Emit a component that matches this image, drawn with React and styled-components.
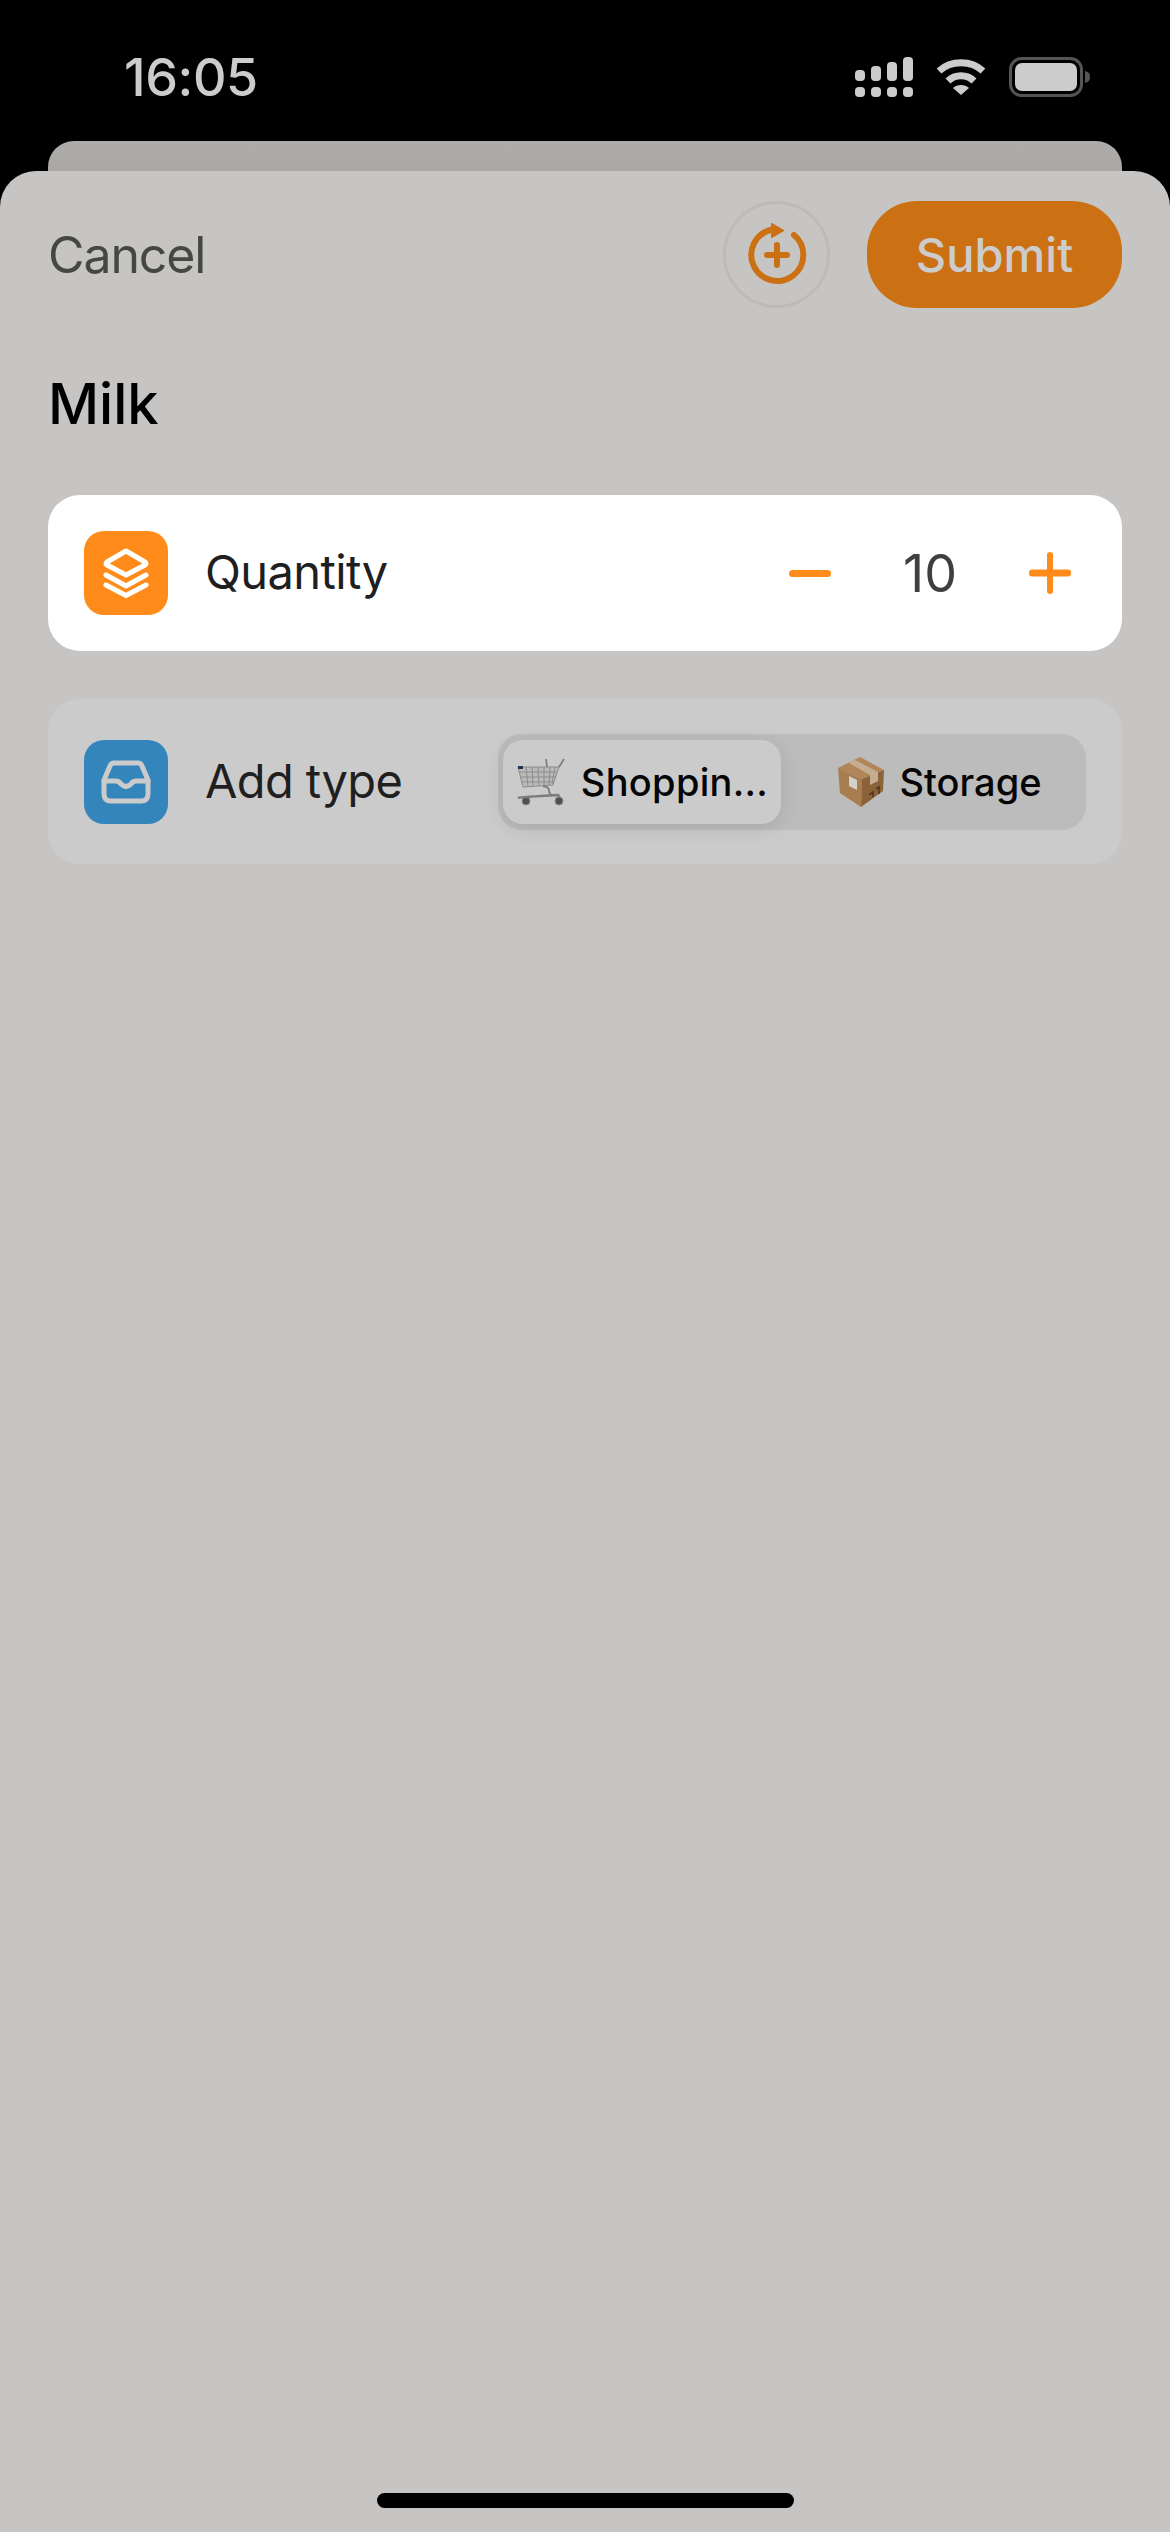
import React from "react";
import styled, { createGlobalStyle } from "styled-components";

const Global = createGlobalStyle`
  html, body { margin: 0; padding: 0; background: #000; }
  body { font-family: Inter, "Liberation Sans", sans-serif; }
`;

const Screen = styled.div`
  position: relative;
  width: 1170px;
  height: 2532px;
  background: #000;
  overflow: hidden;
  display: flex;
  flex-direction: column;
`;

const StatusBar = styled.div`
  height: 141px;
  flex: none;
  box-sizing: border-box;
  padding: 50px 79px 0 124px;
  display: flex;
  align-items: flex-start;
  justify-content: space-between;
`;

const Clock = styled.div`
  font-size: 52px;
  line-height: 56px;
  font-weight: 500;
  color: #cccccc;
  letter-spacing: -0.4px;
`;

const StatusIcons = styled.div`
  display: flex;
  align-items: center;
  gap: 23px;
  padding-top: 7px;
`;

const BackCard = styled.div`
  height: 30px;
  flex: none;
  margin: 0 48px;
  border-radius: 26px 26px 0 0;
  background: linear-gradient(#adacaa, #a9a8a5);
`;

const Sheet = styled.div`
  flex: 1;
  box-sizing: border-box;
  padding: 30px 48px 0;
  background: #c6c5c3;
  border-radius: 36px 36px 0 0;
`;

const TopRow = styled.div`
  display: flex;
  align-items: center;
  height: 107px;
`;

const Cancel = styled.div`
  font-size: 50px;
  color: #464644;
  letter-spacing: -1.1px;
  flex: 1;
`;

const RoundButton = styled.div`
  width: 107px;
  height: 107px;
  box-sizing: border-box;
  border: 3px solid #bcbbb9;
  border-radius: 50%;
  display: flex;
  align-items: center;
  justify-content: center;
  margin-right: 37px;
`;

const Submit = styled.div`
  width: 255px;
  height: 107px;
  border-radius: 50px;
  background: #cc7014;
  color: #cccccc;
  font-size: 47px;
  font-weight: 500;
  display: flex;
  align-items: center;
  justify-content: center;
`;

const Title = styled.div`
  font-size: 56px;
  line-height: 68px;
  font-weight: 500;
  color: #000;
  margin-top: 62px;
`;

const Row = styled.div`
  display: flex;
  align-items: center;
  box-sizing: border-box;
  padding: 0 36px;
  height: ${p => p.$height}px;
  margin-top: ${p => p.$top}px;
  border-radius: 32px;
  background: ${p => p.$bg};
`;

const IconTile = styled.div`
  width: 84px;
  height: 84px;
  flex: none;
  border-radius: 20px;
  background: ${p => p.$bg};
  display: flex;
  align-items: center;
  justify-content: center;
`;

const RowLabel = styled.div`
  font-size: 47px;
  line-height: 54px;
  padding-bottom: 2px;
  color: #1f1f1f;
  letter-spacing: -0.6px;
  margin-left: 37px;
  flex: 1;
`;

const Stepper = styled.div`
  display: flex;
  align-items: center;
  padding-right: 15px;
`;

const Count = styled.div`
  width: 198px;
  text-align: center;
  font-size: 52px;
  color: #3f3f3f;
`;

const Segment = styled.div`
  width: 588px;
  height: 96px;
  box-sizing: border-box;
  padding: 6px 5px;
  display: flex;
  gap: 18px;
  background: #bcbcbc;
  border-radius: 24px;
  flex: none;
`;

const Option = styled.div`
  display: flex;
  align-items: center;
  justify-content: center;
  gap: 15px;
  width: ${p => p.$active ? 278 : 282}px;
  border-radius: 20px;
  font-size: 38px;
  font-weight: 500;
  letter-spacing: ${p => p.$active ? 0.3 : 0}px;
  color: #050505;
  background: ${p => p.$active ? "#cbcbcb" : "transparent"};
  box-shadow: ${p => p.$active ? "0 4px 20px rgba(0,0,0,0.1)" : "none"};
`;

const HomeBar = styled.div`
  position: absolute;
  left: 377px;
  bottom: 24px;
  width: 417px;
  height: 15px;
  border-radius: 8px;
  background: #000;
`;

const SignalIcon = () => (
  <svg width="58" height="40" viewBox="0 0 58 40" fill="#cccccc">
    <rect y="13" width="10" height="11" rx="4" />
    <rect x="16" y="9" width="10" height="15" rx="4" />
    <rect x="32" y="5" width="10" height="19" rx="4" />
    <rect x="48" width="10" height="24" rx="4" />
    <rect y="30" width="10" height="10" rx="4" />
    <rect x="16" y="30" width="10" height="10" rx="4" />
    <rect x="32" y="30" width="10" height="10" rx="4" />
    <rect x="48" y="30" width="10" height="10" rx="4" />
  </svg>
);

const WifiIcon = () => (
  <svg width="50" height="38" viewBox="0 0 50 38" fill="none" stroke="#cccccc" strokeWidth="7">
    <path d="M3 13 C15 2 35 2 47 13" />
    <path d="M12 23 C19 16 31 16 38 23" />
    <path d="M25 37 L17 30 C21 26 29 26 33 30 Z" fill="#cccccc" stroke="none" />
  </svg>
);

const BatteryIcon = () => (
  <svg width="82" height="40" viewBox="0 0 82 40">
    <rect x="1.5" y="1.5" width="71" height="37" rx="11" fill="none" stroke="#555555" strokeWidth="3" />
    <rect x="6" y="6" width="62" height="28" rx="7" fill="#cccccc" />
    <path d="M76 14 C80 15 81 17 81 20 C81 23 80 25 76 26 Z" fill="#555555" />
  </svg>
);

const AddCycleIcon = () => (
  <svg width="60" height="66" viewBox="0 0 60 66" fill="none" stroke="#cc7014" strokeWidth="6" strokeLinecap="round">
    <path d="M25 7.500 A 26 26 0 1 0 47 13" />
    <path d="M25 2 L36 8.500 L25 15 Z" fill="#cc7014" strokeWidth="2" strokeLinejoin="round" />
    <path d="M20 33 H40 M30 23 V43" />
  </svg>
);

const LayersIcon = () => (
  <svg width="46" height="50" viewBox="0 0 46 50" fill="none" stroke="#fff" strokeWidth="5" strokeLinecap="round" strokeLinejoin="round">
    <path d="M23 3 L42 14 Q44 15.500 42 17 L23 27 L4 17 Q2 15.500 4 14 Z" />
    <path d="M3 27 L23 38 L43 27" />
    <path d="M3 37 L23 47.500 L43 37" />
  </svg>
);

const TrayIcon = () => (
  <svg width="50" height="44" viewBox="0 0 50 44" fill="none" stroke="#cbcbcb" strokeWidth="5" strokeLinecap="round" strokeLinejoin="round">
    <path d="M13 3 H37 Q40 3 41 6 L47 20 V34 Q47 41 40 41 H10 Q3 41 3 34 V20 L9 6 Q10 3 13 3 Z" />
    <path d="M3 21 H15 Q18 21 20 24 Q25 29 30 24 Q32 21 35 21 H47" />
  </svg>
);

const MinusIcon = () => (
  <svg width="42" height="7" viewBox="0 0 42 7"><rect width="42" height="7" rx="3.500" fill="#ff8c1a" /></svg>
);

const PlusIcon = () => (
  <svg width="42" height="42" viewBox="0 0 42 42" fill="#ff8c1a">
    <rect y="17.500" width="42" height="7" rx="3" />
    <rect x="18" width="6" height="42" rx="3" />
  </svg>
);

// no colour emoji font here, so the two emoji are drawn
const CartEmoji = () => (
  <svg width="50" height="50" viewBox="0 0 50 50" fill="none">
    <g stroke="#8c8c8c" strokeWidth="1">
      <path d="M2 10 L43 10 L37 28 L7 30 Z" fill="#bababa" />
      <path d="M3 15 L41 15 M4 20 L40 20 M6 25 L38 25 M10 10 L12 29 M16 10 L17 29 M22 10 L23 29 M28 10 L28 28 M34 10 L33 28 M39 10 L36 27" />
    </g>
    <path d="M43 10 L48 2 M31 10 L30 2 M27 29 Q34 30 33 35 L36 39" stroke="#7f7f7f" strokeWidth="1.800" />
    <path d="M2 41 Q4 40 42 38 L44 41" stroke="#7d7d7d" strokeWidth="2.500" />
    <rect x="2" y="9" width="5" height="3" fill="#23364f" />
    <circle cx="10" cy="44" r="4" fill="#55504c" stroke="#8a8a8a" strokeWidth="1" />
    <circle cx="43" cy="44" r="4" fill="#55504c" stroke="#8a8a8a" strokeWidth="1" />
  </svg>
);

const BoxEmoji = () => (
  <svg width="46" height="50" viewBox="0 0 46 50">
    <path d="M22 0 L46 13 L24 22 L0 11 Z" fill="#b08659" />
    <path d="M0 11 L24 22 L23 50 L2 36 Z" fill="#a87d50" />
    <path d="M24 22 L46 13 L45 34 L23 50 Z" fill="#8c6238" />
    <path d="M10 5.500 L17 3 L40 15 L40 24 L32 28 L32 18 Z" fill="#c4ae92" />
    <path d="M11 19 L19 23 L19 33 L11 29 Z" fill="#d3d2cf" />
    <path d="M31 38 L35 35 L35 40 M38 32 L41 30 L41 37" stroke="#4a3320" strokeWidth="1.500" fill="none" />
  </svg>
);

export default function App() {
  return (
    <Screen>
      <Global />
      <StatusBar>
        <Clock>16:05</Clock>
        <StatusIcons>
          <SignalIcon />
          <WifiIcon />
          <BatteryIcon />
        </StatusIcons>
      </StatusBar>
      <BackCard />
      <Sheet>
        <TopRow>
          <Cancel>Cancel</Cancel>
          <RoundButton><AddCycleIcon /></RoundButton>
          <Submit>Submit</Submit>
        </TopRow>
        <Title>Milk</Title>
        <Row $height={156} $top={57} $bg="#ffffff">
          <IconTile $bg="#ff8c1a"><LayersIcon /></IconTile>
          <RowLabel>Quantity</RowLabel>
          <Stepper>
            <MinusIcon />
            <Count>10</Count>
            <PlusIcon />
          </Stepper>
        </Row>
        <Row $height={165} $top={48} $bg="#cbcbcb">
          <IconTile $bg="#3485bc"><TrayIcon /></IconTile>
          <RowLabel>Add type</RowLabel>
          <Segment>
            <Option $active><CartEmoji />Shoppin...</Option>
            <Option><BoxEmoji />Storage</Option>
          </Segment>
        </Row>
      </Sheet>
      <HomeBar />
    </Screen>
  );
}
